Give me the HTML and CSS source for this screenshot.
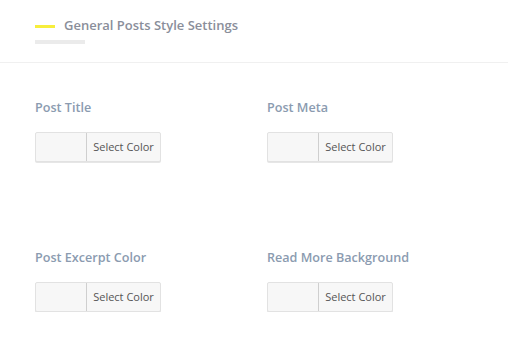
FILE: index.html
```html
<!DOCTYPE html>
<html lang="en">
<head>
    <meta charset="UTF-8">
    <title>General Posts Style Settings</title>
    <link rel="stylesheet" href="styles.css">
</head>
<body>
    <div class="panel">
        <div class="panel-head">
            <div class="title-row">
                <span class="title-mark"></span>
                <h2 class="title">General Posts Style Settings</h2>
            </div>
            <span class="title-bar"></span>
        </div>

        <div class="fields">
            <div class="field">
                <label class="field-label">Post Title</label>
                <button class="color-picker"><span class="swatch"></span><span class="pick-text">Select Color</span></button>
            </div>
            <div class="field">
                <label class="field-label">Post Meta</label>
                <button class="color-picker"><span class="swatch"></span><span class="pick-text">Select Color</span></button>
            </div>
            <div class="field">
                <label class="field-label">Post Excerpt Color</label>
                <button class="color-picker"><span class="swatch"></span><span class="pick-text">Select Color</span></button>
            </div>
            <div class="field">
                <label class="field-label">Read More Background</label>
                <button class="color-picker"><span class="swatch"></span><span class="pick-text">Select Color</span></button>
            </div>
        </div>
    </div>
</body>
</html>
```

FILE: styles.css
```css
body {
    margin: 0;
    background-color: #fff;
    font-family: 'Open Sans', sans-serif;
}

.panel-head {
    padding: 16px 35px 18px;
    border-bottom: 1px solid #f0f0f0;
}

.title-row {
    display: flex;
    align-items: center;
    height: 18px;
}

.title-mark {
    width: 20px;
    height: 3px;
    background-color: #f7ee3c;
    margin: 3px 9px 0 0;
}

.title {
    margin: 0;
    font-size: 13px;
    font-weight: 600;
    color: #8a8e9a;
}

.title-bar {
    display: block;
    width: 50px;
    height: 4px;
    margin-top: 6px;
    background-color: #ebebeb;
}

.fields {
    display: grid;
    grid-template-columns: 232px 232px;
    row-gap: 87px;
    padding: 36px 35px 0;
}

.field-label {
    display: block;
    font-size: 12.6px;
    font-weight: 600;
    color: #8b9bb0;
    line-height: 18px;
    margin-bottom: 15px;
}

.color-picker {
    display: flex;
    box-sizing: border-box;
    height: 30px;
    padding: 0;
    border: 1px solid #e2e2e2;
    border-radius: 2px;
    background-color: #f7f7f7;
    box-shadow: 0 1px 0 #e6e6e6;
    font-family: 'Open Sans', sans-serif;
    cursor: pointer;
}

.swatch {
    width: 50px;
    height: 100%;
    border-right: 1px solid #cfcfcf;
}

.pick-text {
    width: 73px;
    line-height: 28px;
    font-size: 11px;
    color: #555;
    text-align: center;
}
```
